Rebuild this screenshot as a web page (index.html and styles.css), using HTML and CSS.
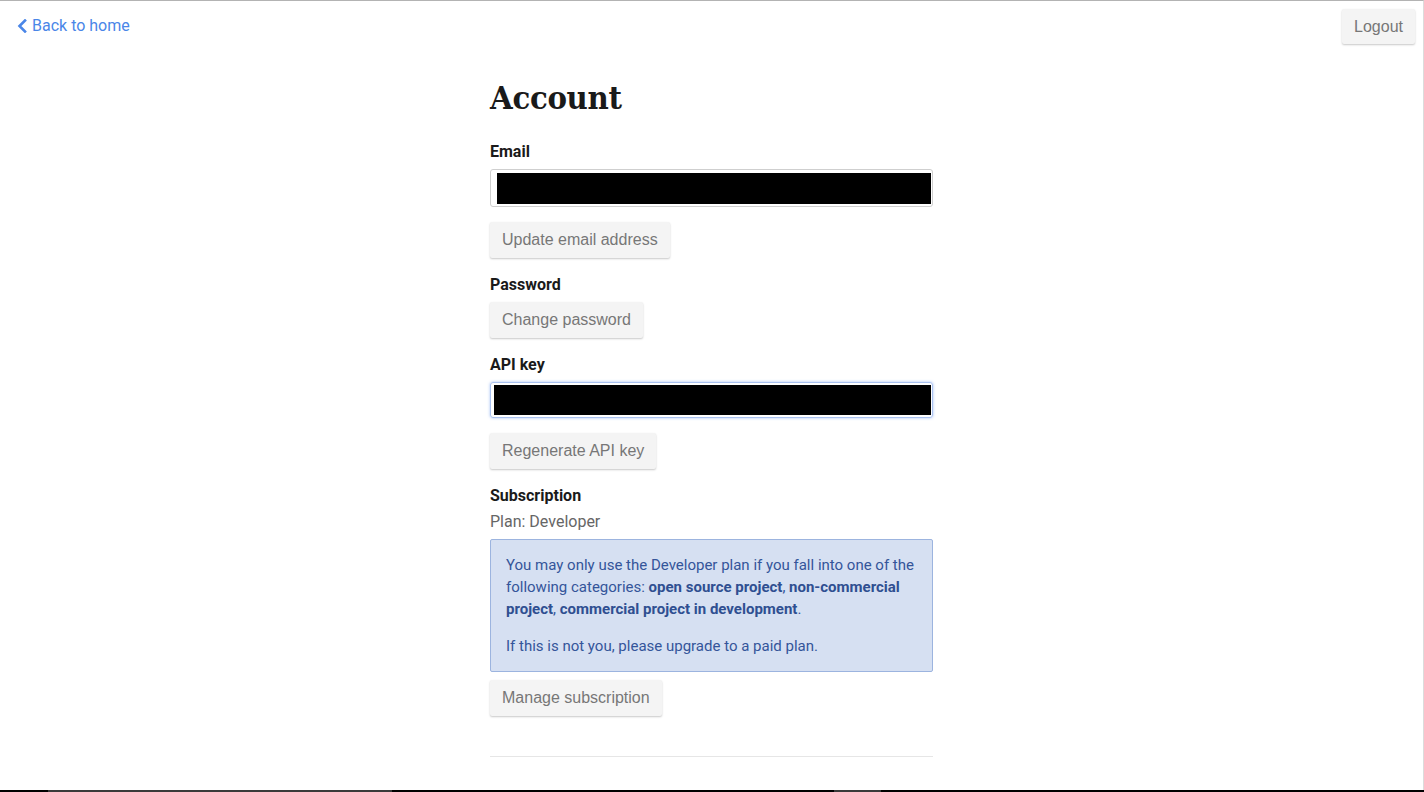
FILE: index.html
```html
<!DOCTYPE html>
<html lang="en">
<head>
<meta charset="utf-8">
<title>Account</title>
<link rel="stylesheet" href="styles.css">
</head>
<body>
<div class="window">
  <div class="page">
    <header class="topbar">
      <a class="back" href="#">
        <svg class="chev" width="10" height="14" viewBox="0 0 10 14" aria-hidden="true"><path d="M8 1.5 L2.5 7 L8 12.5" fill="none" stroke="#4a86e8" stroke-width="2.6" stroke-linecap="square"/></svg>
        <span>Back to home</span>
      </a>
      <button class="btn logout">Logout</button>
    </header>
    <main class="content">
      <h1 class="title">Account</h1>

      <div class="label">Email</div>
      <div class="field"><div class="redact"></div></div>
      <button class="btn">Update email address</button>

      <div class="label">Password</div>
      <button class="btn">Change password</button>

      <div class="label">API key</div>
      <div class="field field-focus"><div class="redact"></div></div>
      <button class="btn">Regenerate API key</button>

      <div class="label">Subscription</div>
      <div class="plan">Plan: Developer</div>
      <div class="alert">
        <p>You may only use the Developer plan if you fall into one of the following categories: <strong>open source project</strong>, <strong>non-commercial project</strong>, <strong>commercial project in development</strong>.</p>
        <p>If this is not you, please upgrade to a paid plan.</p>
      </div>
      <button class="btn">Manage subscription</button>

      <hr class="rule">
    </main>
  </div>
  <div class="taskbar">
    <span class="seg seg-a"></span>
    <span class="seg seg-b"></span>
    <span class="seg seg-c"></span>
    <span class="seg seg-d"></span>
    <span class="seg seg-e"></span>
  </div>
</div>
</body>
</html>
```

FILE: styles.css
```css
html, body {
  margin: 0;
  padding: 0;
  background: #ffffff;
}
body {
  font-family: Roboto, "Liberation Sans", Arial, sans-serif;
  color: #222;
}
.window {
  width: 1424px;
  height: 792px;
  display: flex;
  flex-direction: column;
  overflow: hidden;
}
.page {
  flex: 1;
  border-top: 1px solid #b3b3b3;
  border-right: 1px solid #dcdcdc;
  overflow: hidden;
}
.topbar {
  display: flex;
  justify-content: space-between;
  align-items: flex-start;
  padding: 8px 8px 0 17px;
}
.back {
  display: flex;
  align-items: center;
  gap: 5px;
  margin-top: 7px;
  line-height: 20px;
  font-size: 16px;
  color: #4a86e8;
  text-decoration: none;
}
.chev { display: block; }
.btn {
  display: block;
  height: 36px;
  padding: 0 12px;
  border: none;
  border-radius: 2px;
  background: #f4f4f4;
  box-shadow: 0 1px 2px rgba(0,0,0,0.22);
  font-family: "Liberation Sans", Arial, sans-serif;
  font-size: 16px;
  color: #777;
  cursor: pointer;
}
.logout {
  height: 35px;
  padding: 0 12px;
}
.content {
  width: 443px;
  margin: 0 auto;
}
.title {
  margin: 34px 0 24px;
  height: 40px;
  line-height: 40px;
  font-family: "DejaVu Serif Condensed", "DejaVu Serif", serif;
  font-stretch: condensed;
  font-size: 32.5px;
  font-weight: bold;
  color: #1a1a1a;
  letter-spacing: -0.3px;
}
.label {
  margin: 17px 0 7px;
  line-height: 20px;
  font-size: 16px;
  font-weight: bold;
  color: #1a1a1a;
}
.title + .label { margin-top: 0; }
.field {
  box-sizing: border-box;
  height: 38px;
  border: 1px solid #cfcfcf;
  border-radius: 3px;
  padding: 3px 1px 2px 6px;
  margin-bottom: 15px;
}
.field-focus {
  height: 36px;
  padding: 2px 1px 2px 3px;
  border-color: #a9c1f0;
  box-shadow: 0 0 3px rgba(90,140,235,0.55);
}
.redact {
  height: 100%;
  background: #000;
}
.plan {
  margin-top: -1px;
  line-height: 20px;
  font-size: 16px;
  color: #666;
  margin-bottom: 7px;
}
.alert {
  box-sizing: border-box;
  height: 133px;
  padding: 14px 15px 14px;
  background: #d6e0f2;
  border: 1px solid #9cb4df;
  border-radius: 2px;
  color: #34559a;
  font-size: 15px;
  line-height: 22px;
  margin-bottom: 8px;
}
.alert p { margin: 0 0 15px; }
.alert p:last-child { margin-bottom: 0; }
.alert strong { font-weight: bold; color: #2f4f91; }
.rule {
  margin: 40px 0 0;
  border: none;
  border-top: 1px solid #e6e6e6;
  height: 0;
}
.taskbar {
  height: 2px;
  display: flex;
  background: #000;
}
.seg { display: block; height: 2px; }
.seg-a { width: 48px; background: #000; }
.seg-b { width: 344px; background: #3a3a3a; }
.seg-c { width: 442px; background: #000; }
.seg-d { width: 47px; background: #3a3a3a; }
.seg-e { flex: 1; background: #000; }
```
